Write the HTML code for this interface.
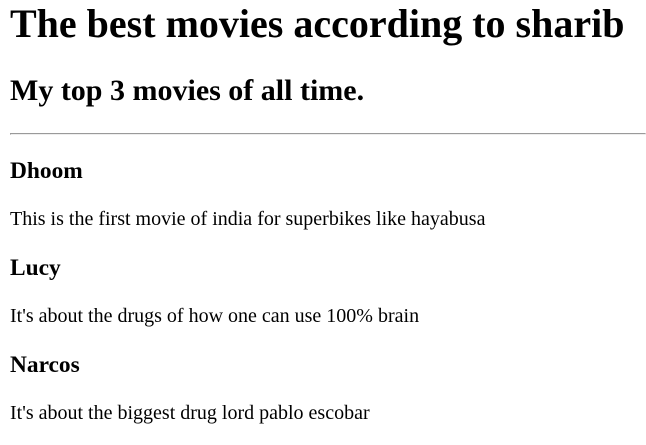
<!DOCTYPE html>
<html><head><style>
html{zoom:1.25}
body{margin:0 0 0 8px;font-family:"Liberation Serif",serif;color:#000;background:#fff}
h1{margin-top:0}
</style></head><body>
<h1>The best movies according to sharib</h1>
<h2>My top 3 movies of all time.</h2>
<hr>
<h3>Dhoom</h3>
<p>This is the first movie of india for superbikes like hayabusa</p>
<h3>Lucy</h3>
<p>It's about the drugs of how one can use 100% brain</p>
<h3>Narcos</h3>
<p>It's about the biggest drug lord pablo escobar</p>
</body></html>
